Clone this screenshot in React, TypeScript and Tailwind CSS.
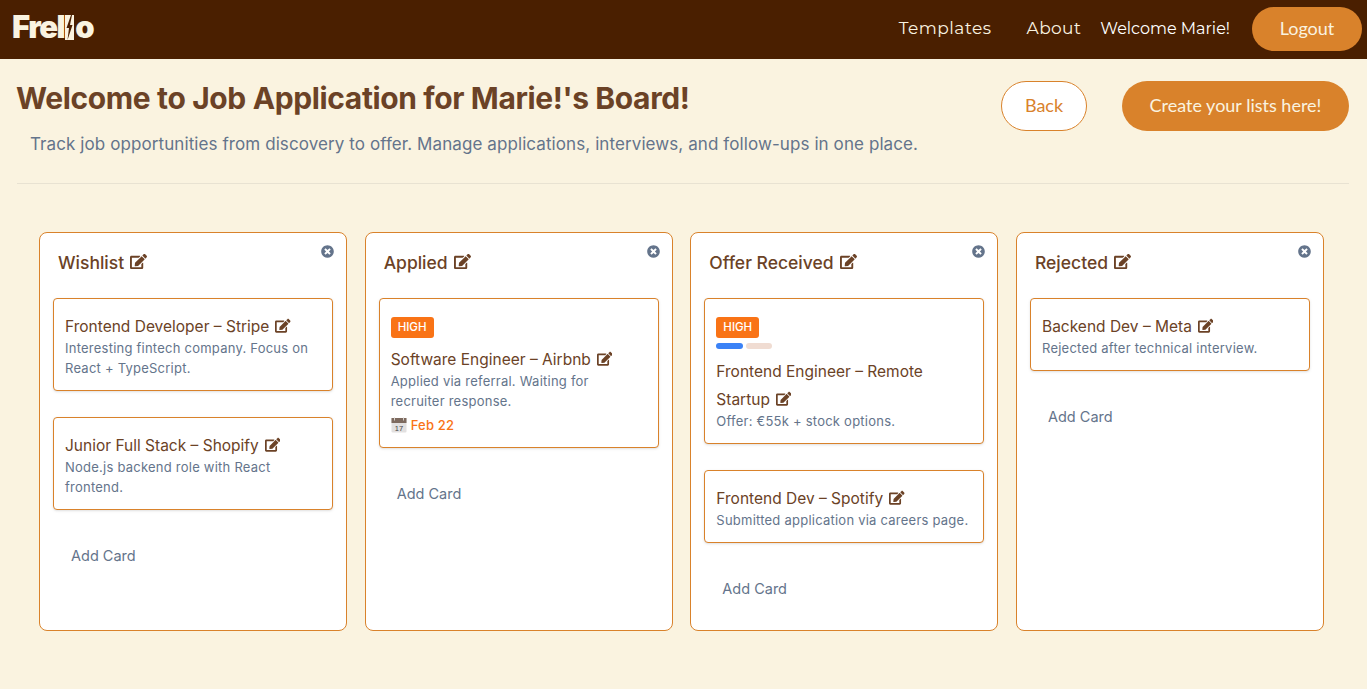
import React from "react";
import { FaEdit, FaTimesCircle } from "react-icons/fa";

type Job = {
  title: string;
  desc: string;
  high?: boolean;
  labels?: boolean;
  due?: string;
  wrapTitle?: boolean;
};

type BoardList = { name: string; cards: Job[] };

const lists: BoardList[] = [
  {
    name: "Wishlist",
    cards: [
      { title: "Frontend Developer – Stripe", desc: "Interesting fintech company. Focus on React + TypeScript." },
      { title: "Junior Full Stack – Shopify", desc: "Node.js backend role with React frontend." },
    ],
  },
  {
    name: "Applied",
    cards: [
      {
        title: "Software Engineer – Airbnb",
        desc: "Applied via referral. Waiting for recruiter response.",
        high: true,
        due: "Feb 22",
      },
    ],
  },
  {
    name: "Offer Received",
    cards: [
      {
        title: "Frontend Engineer – Remote Startup",
        desc: "Offer: €55k + stock options.",
        high: true,
        labels: true,
        wrapTitle: true,
      },
      { title: "Frontend Dev – Spotify", desc: "Submitted application via careers page." },
    ],
  },
  {
    name: "Rejected",
    cards: [{ title: "Backend Dev – Meta", desc: "Rejected after technical interview." }],
  },
];

// Small calendar glyph, the emoji font isn't available in the sandbox
function CalendarIcon(): React.ReactElement {
  return (
    <svg width="16" height="16" viewBox="0 0 16 16" className="shrink-0">
      <rect x="0.5" y="1" width="15" height="14.5" rx="1" fill="#e2e0e0" />
      <rect x="0.5" y="1" width="15" height="5" fill="#7d6a5f" />
      <rect x="3" y="0.5" width="1" height="3" fill="#d8d2cc" />
      <rect x="12" y="0.5" width="1" height="3" fill="#d8d2cc" />
      <text x="8" y="14" textAnchor="middle" fontSize="7.5" fontFamily="Liberation Sans" fill="#444">17</text>
    </svg>
  );
}

function Logo(): React.ReactElement {
  return (
    <div className="ml-[12px] flex -translate-y-[3px] items-end text-[31px] leading-[32px] font-black tracking-[-1.5px] text-[#faf3e0] font-['Inter',sans-serif]">
      <span>Frel</span>
      <svg width="9" height="25" viewBox="0 0 9 25" className="mb-[3px] ml-[1px]">
        <rect width="9" height="25" fill="#faf3e0" />
        <path d="M6 0 L1.5 13 L4 13 L2.5 25 L7.5 10 L5 10 L7 0 Z" fill="#4a1f00" />
      </svg>
      <span className="ml-[1px]">o</span>
    </div>
  );
}

function JobCard({ job }: { job: Job }): React.ReactElement {
  return (
    <div className="rounded-[4px] border border-[#d9822b] bg-white px-[11px] py-[12px] shadow-sm">
      {job.high && (
        <span className="mt-[6px] block w-fit rounded-[3px] bg-[#f97316] px-[7px] text-[11.5px] leading-[21px] font-medium text-white">
          HIGH
        </span>
      )}
      {job.labels && (
        <div className="mt-[5px] flex gap-[3px]">
          <span className="h-[6px] w-[27px] rounded-full bg-[#3b82f6]" />
          <span className="h-[6px] w-[26px] rounded-full bg-[#f0dcd2]" />
        </div>
      )}
      <div
        className={`${job.labels ? "mt-[9px]" : job.high ? "mt-[10px]" : "mt-[4px]"} ${job.wrapTitle ? "pr-[20px] leading-[28px]" : "leading-[23px]"} text-[15.5px] text-[#6b4226]`}
      >
        {job.title}
        <FaEdit className="ml-[6px] inline-block size-[15.5px] -translate-y-[2px] align-middle" />
      </div>
      <p className={`${job.wrapTitle ? "-mt-[3px]" : ""} text-[13px] leading-[20px] tracking-[0.235px] text-[#64748b]`}>{job.desc}</p>
      {job.due && (
        <div className="mt-[4px] flex items-center gap-[4px] text-[13px] leading-[20px] font-medium tracking-[0.2px] text-[#f97316]">
          <CalendarIcon />
          {job.due}
        </div>
      )}
    </div>
  );
}

function Column({ list }: { list: BoardList }): React.ReactElement {
  return (
    <div className="relative h-[399px] rounded-[8px] border border-[#d9822b] bg-white px-[13px] pt-[17px]">
      <FaTimesCircle className="absolute top-[12px] right-[12px] size-[13px] text-[#64748b]" />
      <div className="ml-[5px] flex h-[24px] items-center gap-[6px] text-[17.5px] font-medium text-[#6b4226]">
        <span className="translate-y-px">{list.name}</span>
        <FaEdit className="size-[17px] -translate-y-[1px]" />
      </div>
      <div className="mt-[24px]">
        {list.cards.map((job, i) => (
          <div key={job.title} className={i > 0 ? "mt-[26px]" : ""}>
            <JobCard job={job} />
          </div>
        ))}
      </div>
      <div className="mt-[36px] ml-[18px] text-[14.5px] leading-[20px] text-[#64748b]">Add Card</div>
    </div>
  );
}

export default function App(): React.ReactElement {
  return (
    <div className="h-[689px] overflow-hidden bg-[#faf3e0] font-['Inter','Noto_Sans',sans-serif]">
      <header className="flex h-[59px] items-center bg-[#4a1f00] pr-[5px]">
        <Logo />
        <nav className="ml-auto flex -translate-y-[1px] items-center font-['Montserrat','Inter',sans-serif] text-[17px] text-[#faf3e0]">
          <span className="tracking-[0.5px]">Templates</span>
          <span className="ml-[35px] tracking-[0.4px]">About</span>
          <span className="ml-[19px] text-[16px] text-[#fff]">Welcome Marie!</span>
        </nav>
        <button className="ml-[22px] h-[44px] w-[110px] -translate-y-[1px] rounded-full bg-[#d9822b] pb-[2px] font-['Lato',sans-serif] text-[18px] leading-[38px] text-[#faf3e0]">
          Logout
        </button>
      </header>

      <main className="px-[17px]">
        <div className="mr-px flex h-[125px] items-start justify-between border-b border-[#e8e2d2] pt-[22px]">
          <div>
            <h1 className="-translate-x-px -translate-y-px text-[30px] leading-[36px] font-bold tracking-[-0.37px] text-[#6b4226]">
              Welcome to Job Application for Marie!'s Board!
            </h1>
            <p className="mt-[13px] ml-[13px] text-[17px] leading-[28px] tracking-[0.09px] text-[#64748b]">
              Track job opportunities from discovery to offer. Manage applications, interviews, and follow-ups in one place.
            </p>
          </div>
          <div className="flex gap-[35px]">
            <button className="h-[50px] w-[86px] rounded-full border border-[#d9822b] bg-white pb-[2px] font-['Lato',sans-serif] text-[18px] text-[#d9822b]">
              Back
            </button>
            <button className="h-[50px] w-[227px] rounded-full bg-[#d9822b] pb-[2px] font-['Lato',sans-serif] text-[18px] text-[#faf3e0]">
              Create your lists here!
            </button>
          </div>
        </div>

        <div className="mt-[48px] ml-[22px] grid w-[1285px] grid-cols-4 gap-[17.67px]">
          {lists.map((l) => (
            <Column key={l.name} list={l} />
          ))}
        </div>
      </main>
    </div>
  );
}
